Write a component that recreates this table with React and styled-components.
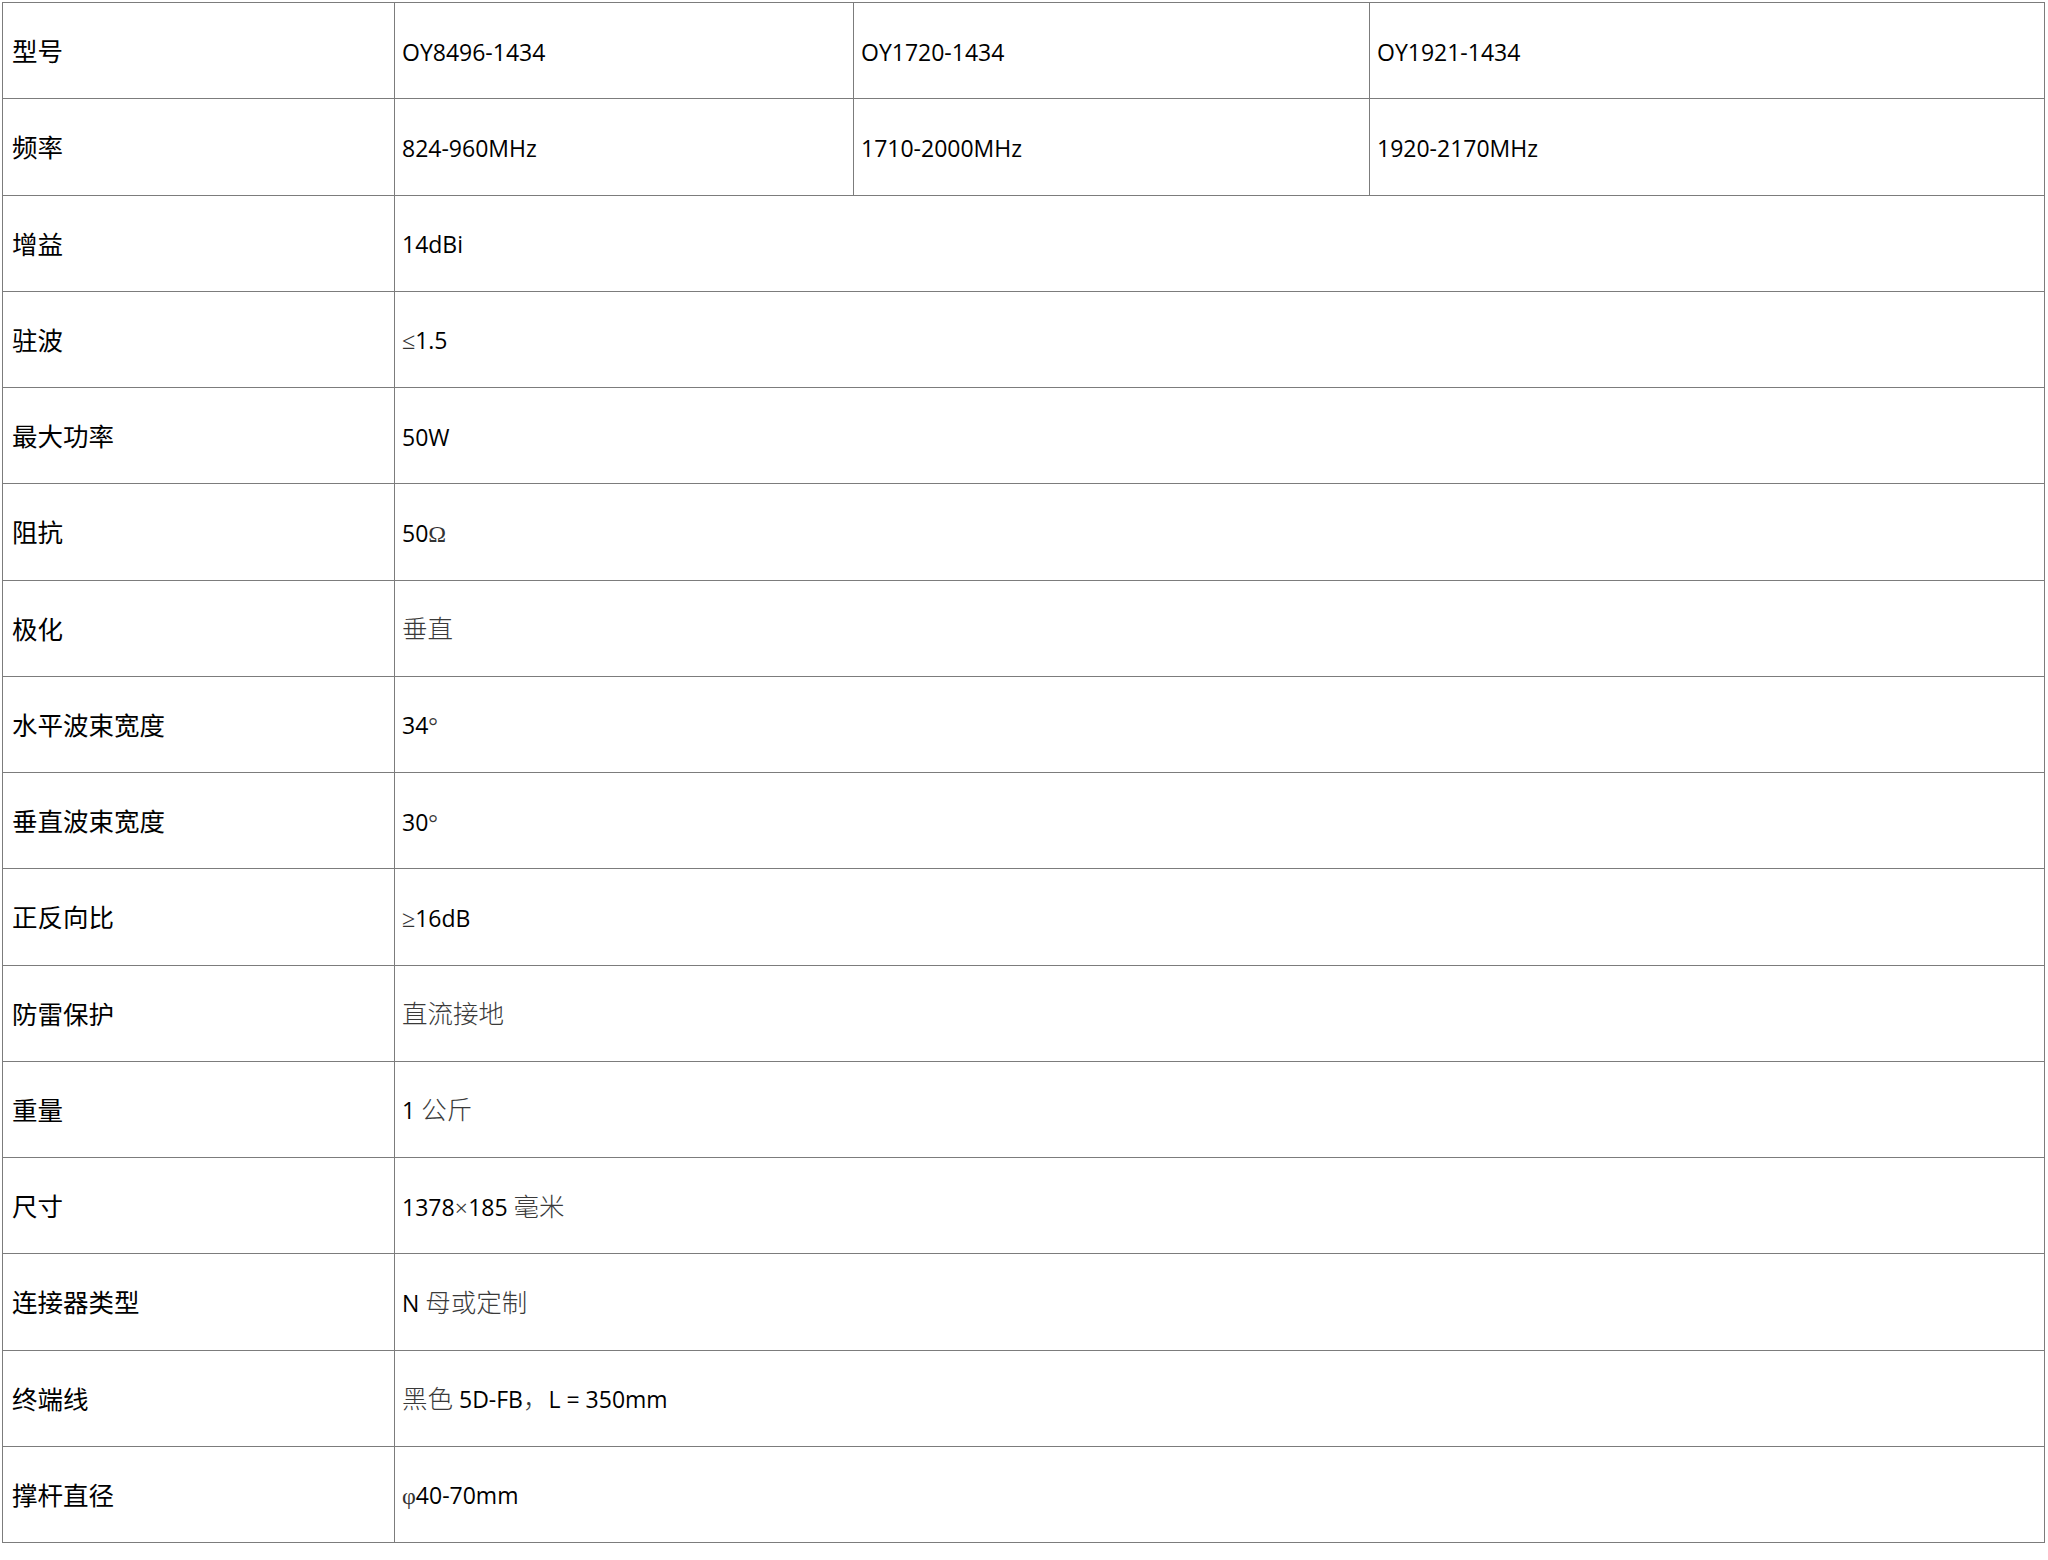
import React from "react";
import styled, { createGlobalStyle } from "styled-components";

const GlobalStyle = createGlobalStyle`
  html, body {
    margin: 0;
    padding: 0;
    background: #ffffff;
  }
  body {
    font-family: "Open Sans", "Noto Sans CJK SC", sans-serif;
    color: #111;
  }
`;

// 기종 (3 models)
const models = ["OY8496-1434", "OY1720-1434", "OY1921-1434"];
const freqs = ["824-960MHz", "1710-2000MHz", "1920-2170MHz"];

// h: 한자 부분 (가는 글꼴), s: 기호, 나머지는 라틴
const specs = [
  { label: "增益", value: [["14dBi"]] },
  { label: "驻波", value: [["≤", "s"], ["1.5"]] },
  { label: "最大功率", value: [["50W"]] },
  { label: "阻抗", value: [["50"], ["Ω", "s"]] },
  { label: "极化", value: [["垂直", "h"]] },
  { label: "水平波束宽度", value: [["34"], ["°", "s"]] },
  { label: "垂直波束宽度", value: [["30"], ["°", "s"]] },
  { label: "正反向比", value: [["≥", "s"], ["16dB"]] },
  { label: "防雷保护", value: [["直流接地", "h"]] },
  { label: "重量", value: [["1 "], ["公斤", "h"]] },
  { label: "尺寸", value: [["1378"], ["×", "s"], ["185 "], ["毫米", "h"]] },
  { label: "连接器类型", value: [["N "], ["母或定制", "h"]] },
  { label: "终端线", value: [["黑色", "h"], [" 5D-FB"], ["，", "h"], ["L = 350mm"]] },
  { label: "撑杆直径", value: [["φ", "s"], ["40-70mm"]] },
];

function Value({ parts }) {
  return parts.map(([t, kind], i) => {
    if (kind === "h") return <Han key={i}>{t}</Han>;
    if (kind === "s") return <Sym key={i}>{t}</Sym>;
    return <span key={i}>{t}</span>;
  });
}

export default function App() {
  return (
    <>
      <GlobalStyle />
      <Page>
        <SpecTable>
          <colgroup>
            <col style={{ width: 392 }} />
            <col style={{ width: 459 }} />
            <col style={{ width: 516 }} />
            <col />
          </colgroup>
          <tbody>
            <Row>
              <LabelCell>型号</LabelCell>
              {models.map((m) => (
                <ValueCell key={m}>{m}</ValueCell>
              ))}
            </Row>
            <Row>
              <LabelCell>频率</LabelCell>
              {freqs.map((f) => (
                <ValueCell key={f}>{f}</ValueCell>
              ))}
            </Row>
            {specs.map((s) => (
              <Row key={s.label}>
                <LabelCell>{s.label}</LabelCell>
                <ValueCell colSpan={3}>
                  <Value parts={s.value} />
                </ValueCell>
              </Row>
            ))}
          </tbody>
        </SpecTable>
      </Page>
    </>
  );
}

const Page = styled.div`
  padding: 2px 0 0 2px;
`;

const SpecTable = styled.table`
  width: 2043px;
  border-collapse: collapse;
  table-layout: fixed;
`;

const Row = styled.tr`
  height: 96.25px;
`;

const Cell = styled.td`
  border: 1px solid #7c7c7c;
  padding: 0 8px;
  vertical-align: middle;
  white-space: nowrap;
  overflow: hidden;
`;

const LabelCell = styled(Cell)`
  font-family: "Noto Sans CJK SC", sans-serif;
  font-size: 25.5px;
  color: #000;
  padding-left: 9px;
  padding-bottom: 2px;
`;

const ValueCell = styled(Cell)`
  font-family: "Open Sans", "Noto Sans CJK SC", sans-serif;
  font-size: 23px;
  line-height: 36px;
  color: #000;
  padding-left: 7px;
  padding-top: 2px;
`;

const Han = styled.span`
  font-family: "Noto Sans CJK SC", sans-serif;
  font-size: 25.5px;
  line-height: 1;
  font-weight: 300;
  color: #3a3a3a;
`;

const Sym = styled.span`
  font-family: "Liberation Serif", serif;
  font-size: 24px;
  line-height: 1;
  color: #333;
`;
